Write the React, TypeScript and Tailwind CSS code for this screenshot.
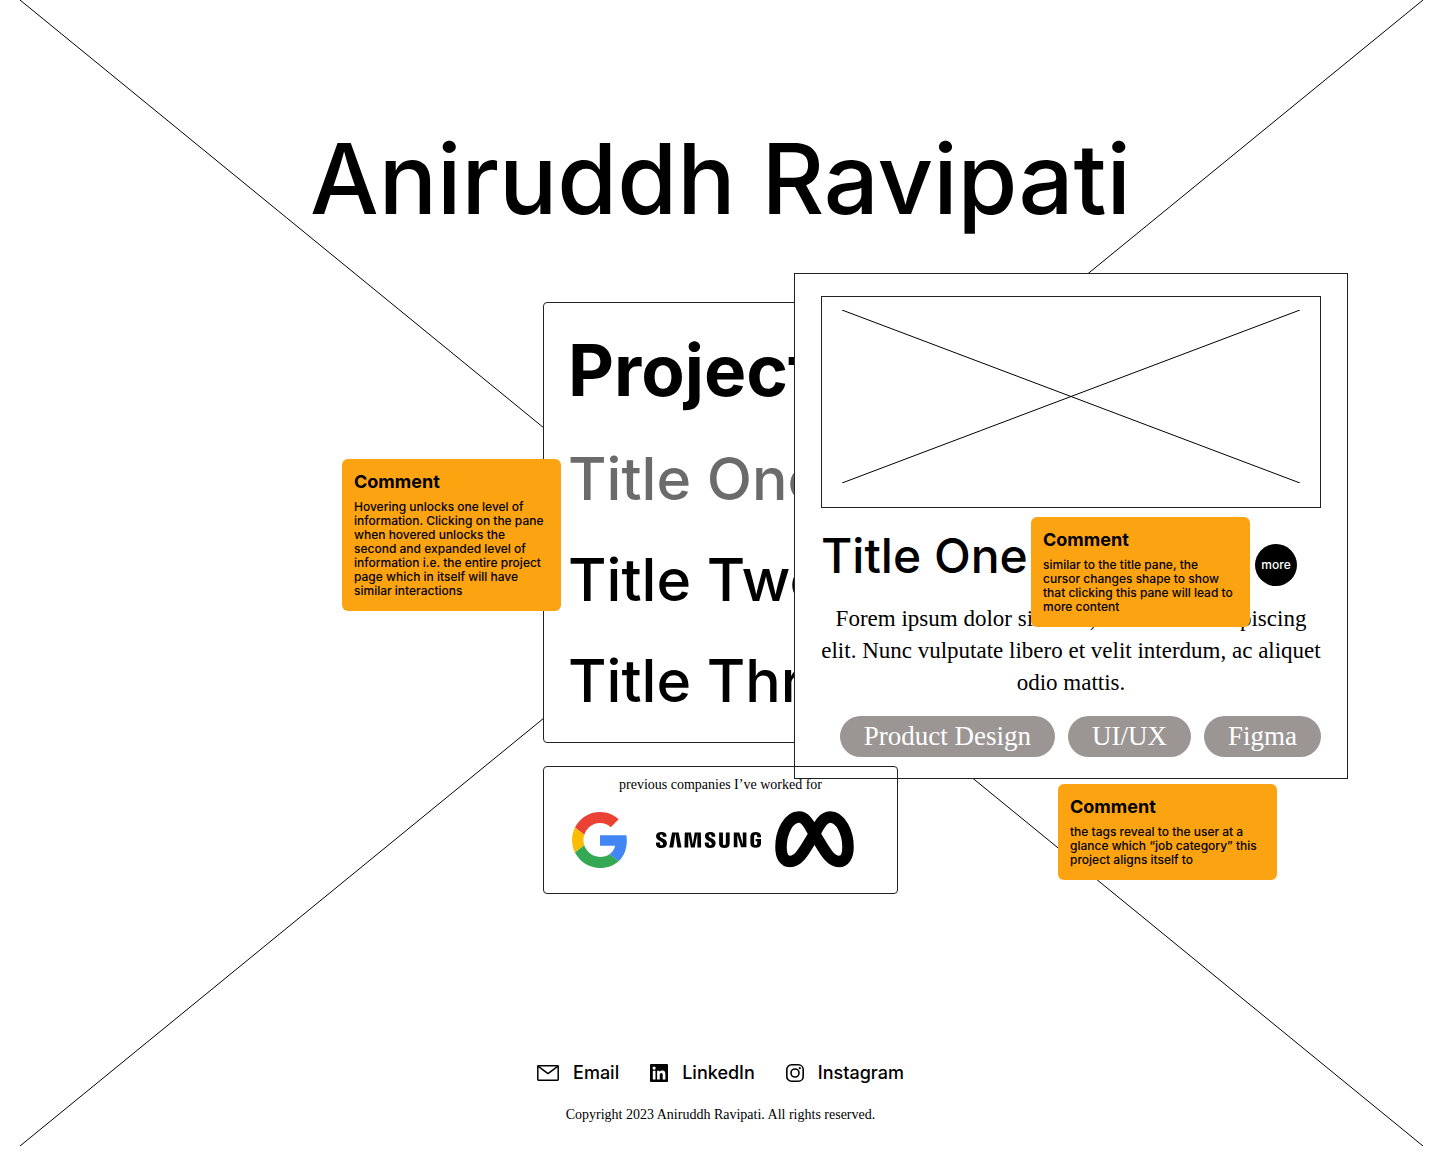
import type { ReactNode } from "react";
import { SiSamsung } from "react-icons/si";

const sans = "font-['Inter',sans-serif]";
const serif = "font-['Liberation_Serif',serif]";

function Comment({ place, children }: { place: string; children: ReactNode }) {
  return (
    <aside className={`absolute w-[219px] rounded-md bg-[#fca311] px-3 pt-[11px] pb-[13px] text-black ${place}`}>
      <h3 className="text-lg leading-6 font-bold">Comment</h3>
      <p className="mt-1.5 text-xs leading-[14px] font-medium">{children}</p>
    </aside>
  );
}

function GoogleLogo() {
  return (
    <svg viewBox="0 0 48 48" className="size-14" role="img" aria-label="Google">
      <path fill="#EA4335" d="M24 9.5c3.54 0 6.71 1.22 9.21 3.6l6.85-6.85C35.9 2.38 30.47 0 24 0 14.62 0 6.51 5.38 2.56 13.22l7.98 6.19C12.43 13.72 17.74 9.5 24 9.5z" />
      <path fill="#4285F4" d="M46.98 24.55c0-1.57-.15-3.09-.38-4.55H24v9.02h12.94c-.58 2.96-2.26 5.48-4.78 7.18l7.73 6c4.51-4.18 7.09-10.36 7.09-17.65z" />
      <path fill="#FBBC05" d="M10.53 28.59c-.48-1.45-.76-2.99-.76-4.59s.27-3.14.76-4.59l-7.98-6.19C.92 16.46 0 20.12 0 24c0 3.88.92 7.54 2.56 10.78l7.97-6.19z" />
      <path fill="#34A853" d="M24 48c6.48 0 11.93-2.13 15.89-5.81l-7.73-6c-2.15 1.45-4.92 2.3-8.16 2.3-6.26 0-11.57-4.22-13.47-9.91l-7.98 6.19C6.51 42.62 14.62 48 24 48z" />
    </svg>
  );
}

function MetaLogo() {
  return (
    <svg viewBox="0 0 79 57" className="h-[57px] w-[79px]" role="img" aria-label="Meta" fill="none" stroke="#000" strokeWidth="11.5">
      <path d="M6 36C6 45 9 50.5 15 50.5C25 50.5 31 36 39.5 23C43 17 47 6 55 6C66 6 73 22 73 36C73 46 69 50.5 64 50.5C54 50.5 48 36 39.5 23C35.5 17 32 6 24 6C13 6 6 22 6 36Z" />
    </svg>
  );
}

function EmailIcon() {
  return (
    <svg viewBox="0 0 22 16" className="h-4 w-[22px]" fill="none" stroke="#000" strokeWidth="1.5" strokeLinejoin="round" aria-hidden="true">
      <rect x="0.8" y="0.8" width="20.4" height="14.4" rx="0.6" />
      <path d="M1 1.2L11 8.6L21 1.2" />
    </svg>
  );
}

function LinkedInIcon() {
  return (
    <svg viewBox="0 0 18 18" className="size-[18px]" aria-hidden="true">
      <rect width="18" height="18" rx="1" />
      <g fill="#fff">
        <circle cx="4.1" cy="4.1" r="1.6" />
        <path d="M2.8 6.8h2.7v8.6H2.8zM7.1 6.8h2.5V8c.5-.8 1.4-1.4 2.7-1.4 2.5 0 3.1 1.6 3.1 3.9v4.9h-2.7v-4.4c0-1.1-.1-2.1-1.3-2.1-1.3 0-1.6.9-1.6 2.1v4.4H7.1z" />
      </g>
    </svg>
  );
}

function InstagramIcon() {
  return (
    <svg viewBox="0 0 18 18" className="size-[18px]" fill="none" stroke="#000" strokeWidth="1.6" aria-hidden="true">
      <rect x="0.8" y="0.8" width="16.4" height="16.4" rx="4.8" />
      <circle cx="9" cy="9" r="4" />
      <circle cx="13.8" cy="4.2" r="1.1" fill="#000" stroke="none" />
    </svg>
  );
}

const links = [
  { label: "Email", icon: <EmailIcon /> },
  { label: "LinkedIn", icon: <LinkedInIcon /> },
  { label: "Instagram", icon: <InstagramIcon /> },
];

const tags = ["Product Design", "UI/UX", "Figma"];

function Backdrop() {
  return (
    <div className="absolute top-0 right-[18px] bottom-3 left-5" aria-hidden="true">
      <svg className="size-full" viewBox="0 0 100 100" preserveAspectRatio="none" stroke="#000">
        <path d="M0 0L100 100M100 0L0 100" vectorEffect="non-scaling-stroke" />
      </svg>
    </div>
  );
}

function ProjectPane() {
  return (
    <article className="absolute -top-[29px] left-[251px] w-[554px] border border-[#222] bg-white px-[26px] pt-[22px] pb-[21px]">
      <div className="h-[212px] border border-[#222] px-5 pt-[13px] pb-6">
        <svg className="size-full" viewBox="0 0 100 100" preserveAspectRatio="none" stroke="#000" role="img" aria-label="Project preview">
          <path d="M0 0L100 100M100 0L0 100" vectorEffect="non-scaling-stroke" />
        </svg>
      </div>
      <div className="mt-4 flex items-center justify-between pr-6">
        <h2 className="text-5xl leading-[64px] font-medium">Title One</h2>
        <button type="button" className="mt-[18px] size-[42px] rounded-full bg-black text-xs font-medium text-white">
          more
        </button>
      </div>
      <p className={`-mx-1 mt-[15px] text-center text-[23px] leading-8 ${serif}`}>
        Forem ipsum dolor sit amet, consectetur adipiscing elit. Nunc vulputate libero et velit interdum, ac aliquet odio mattis.
      </p>
      <ul className={`mt-[17px] flex justify-end gap-[13px] text-[27px] leading-[41px] text-white ${serif}`}>
        {tags.map((tag) => (
          <li key={tag} className="rounded-full bg-[#9b9694] px-6">
            {tag}
          </li>
        ))}
      </ul>
      <Comment place="top-[243px] left-[236px]">
        similar to the title pane, the cursor changes shape to show that clicking this pane will lead to more content
      </Comment>
      <Comment place="top-[510px] left-[263px]">
        the tags reveal to the user at a glance which “job category” this project aligns itself to
      </Comment>
    </article>
  );
}

export default function App() {
  return (
    <div className={`relative flex min-h-screen flex-col items-center overflow-hidden bg-white text-black ${sans}`}>
      <Backdrop />
      <h1 className="relative pt-[119px] text-[97px] leading-[120px] font-medium whitespace-nowrap">Aniruddh Ravipati</h1>
      <main className="relative mt-[63px] flex w-[355px] flex-col gap-[23px]">
        <section className="overflow-hidden rounded border border-[#222] bg-white px-6 pt-[17px] pb-[11px] whitespace-nowrap">
          <h2 className="text-[71px] leading-[100px] font-bold">Projects</h2>
          <ul className="mt-2 text-[59px] leading-[101px] font-medium">
            <li className="text-[#6b6b6b]">
              <a href="#one">Title One</a>
            </li>
            <li>
              <a href="#two">Title Two</a>
            </li>
            <li>
              <a href="#three">Title Three</a>
            </li>
          </ul>
        </section>
        <ProjectPane />
        <Comment place="top-[157px] -left-[201px]">
          Hovering unlocks one level of information. Clicking on the pane when hovered unlocks the second and expanded level of information i.e. the entire project page which in itself will have similar interactions
        </Comment>
        <section className="relative h-32 rounded border border-[#222] pt-2">
          <h2 className={`text-center text-sm leading-5 ${serif}`}>previous companies I’ve worked for</h2>
          <div className="mt-4 flex items-center pl-7">
            <GoogleLogo />
            <SiSamsung className="ml-7 h-14 w-[105px]" preserveAspectRatio="xMidYMid slice" role="img" aria-label="Samsung" />
            <div className="ml-[14px]">
              <MetaLogo />
            </div>
          </div>
        </section>
      </main>
      <footer className="relative mt-[167px] flex flex-col items-center pb-6">
        <nav className="flex gap-[31px] text-lg leading-6 font-medium">
          {links.map(({ label, icon }) => (
            <a key={label} href={`#${label.toLowerCase()}`} className="flex items-center gap-[14px]">
              {icon}
              {label}
            </a>
          ))}
        </nav>
        <p className={`mt-5 text-sm leading-5 ${serif}`}>Copyright 2023 Aniruddh Ravipati. All rights reserved.</p>
      </footer>
    </div>
  );
}
